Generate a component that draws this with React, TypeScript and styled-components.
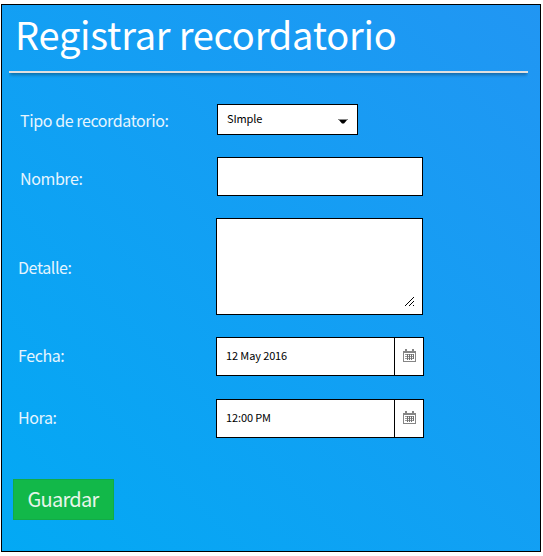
import React from "react";
import styled, { createGlobalStyle } from "styled-components";

const GlobalStyle = createGlobalStyle`
  * { box-sizing: border-box; }
  body { margin: 0; background: #fff; font-family: "Noto Sans CJK SC", "Noto Sans", sans-serif; }
`;

const Panel = styled.main`
  display: flex;
  flex-direction: column;
  align-items: flex-start;
  width: 540px;
  height: 548px;
  margin: 4px 0 0 1px;
  border: 1px solid #000;
  background: linear-gradient(45deg, #03a9f4, #2196f3);
`;

const Title = styled.h1`
  width: 519px;
  height: 68px;
  margin: 0 0 0 7px;
  padding-left: 6px;
  border-bottom: 2px solid #e0e0e0;
  box-shadow: 0 3px 3px -1px rgba(0, 0, 0, 0.3);
  clip-path: inset(0 0 -8px 0);
  color: #fff;
  font-size: 38px;
  font-weight: 400;
  letter-spacing: -0.22px;
  line-height: 58px;
  white-space: nowrap;
`;

const Form = styled.form`
  display: flex;
  flex-direction: column;
  align-items: flex-start;
  padding-top: 31px;
`;

const Row = styled.div<{ $gap: number; $inset?: number }>`
  display: flex;
  align-items: center;
  margin-bottom: ${(p) => p.$gap}px;
  padding-left: ${(p) => 16 + (p.$inset ?? 0)}px;
`;

const Label = styled.label<{ $width: number; $raise?: number; $drop?: number }>`
  width: ${(p) => p.$width}px;
  padding-top: ${(p) => p.$drop ?? 0}px;
  padding-bottom: ${(p) => p.$raise ?? 0}px;
  color: #e6f5fe;
  font-size: 16px;
  font-weight: 400;
  letter-spacing: -0.4px;
  line-height: 24px;
  white-space: nowrap;
`;

const Field = styled.div<{ $width: number; $height: number }>`
  display: flex;
  align-items: center;
  width: ${(p) => p.$width}px;
  height: ${(p) => p.$height}px;
  border: 1px solid #000;
  background: #fff;
  color: #000;
  font-size: 11px;
  letter-spacing: -0.12px;
  line-height: 16px;
`;

const Value = styled.span`
  flex: 1;
  padding: 0 0 4px 9px;
`;

const Caret = styled.svg`
  margin: 4px 9px 0 0;
`;

const Grip = styled.svg`
  align-self: flex-end;
  margin: 0 8px 8px auto;
`;

const Picker = styled.span`
  display: flex;
  align-items: center;
  justify-content: center;
  width: 29px;
  height: 100%;
  padding-bottom: 1px;
  border-left: 1px solid #000;
`;

const SaveButton = styled.button`
  width: 101px;
  height: 41px;
  margin: 0 0 0 11px;
  padding: 0 1px 1px 0;
  border: 1px solid #12ab45;
  background: #12b849;
  color: #e8f5e9;
  font-family: inherit;
  font-size: 20px;
  font-weight: 400;
  letter-spacing: -0.7px;
  line-height: 30px;
`;

const CalendarIcon = () => (
  <svg width="13" height="14" viewBox="0 0 13 14" fill="none" shapeRendering="crispEdges">
    <path d="M.5 2.5h12v10H.5zM0 3.5h13" stroke="#858585" />
    <path d="M2.5 0v3M3.5 0v3M9.5 0v3M10.5 0v3" stroke="#858585" />
    <path d="M2 5.5h9M2 7.5h9M2 9.5h9" stroke="#999" />
    <path d="M4.5 5v6M6.5 5v6M8.5 5v6M10.5 5v5" stroke="#707070" />
  </svg>
);

const DateField = ({ value }: { value: string }) => (
  <Field $width={208} $height={39}>
    <Value>{value}</Value>
    <Picker>
      <CalendarIcon />
    </Picker>
  </Field>
);

export default function App() {
  return (
    <>
      <GlobalStyle />
      <Panel>
        <Title>Registrar recordatorio</Title>
        <Form>
          <Row $gap={22} $inset={2}>
            <Label $width={197}>Tipo de recordatorio:</Label>
            <Field $width={141} $height={31}>
              <Value>SImple</Value>
              <Caret width="10" height="5" viewBox="0 0 10 5">
                <path d="M0 0h10v1H0z" fill="#888" />
                <path d="M1 1h8L6 4.5H4z" fill="#000" />
              </Caret>
            </Field>
          </Row>
          <Row $gap={22} $inset={2}>
            <Label $width={197} $drop={2}>Nombre:</Label>
            <Field $width={206} $height={39} />
          </Row>
          <Row $gap={22}>
            <Label $width={198}>Detalle:</Label>
            <Field $width={207} $height={97}>
              <Grip width="9" height="9" viewBox="0 0 9 9" stroke="#000">
                <path d="M0 9L9 0M4 9L9 4M8 9L9 8" fill="none" />
              </Grip>
            </Field>
          </Row>
          <Row $gap={23}>
            <Label $width={198} $raise={3}>Fecha:</Label>
            <DateField value="12 May 2016" />
          </Row>
          <Row $gap={41}>
            <Label $width={198} $raise={3}>Hora:</Label>
            <DateField value="12:00 PM" />
          </Row>
          <SaveButton type="button">Guardar</SaveButton>
        </Form>
      </Panel>
    </>
  );
}
